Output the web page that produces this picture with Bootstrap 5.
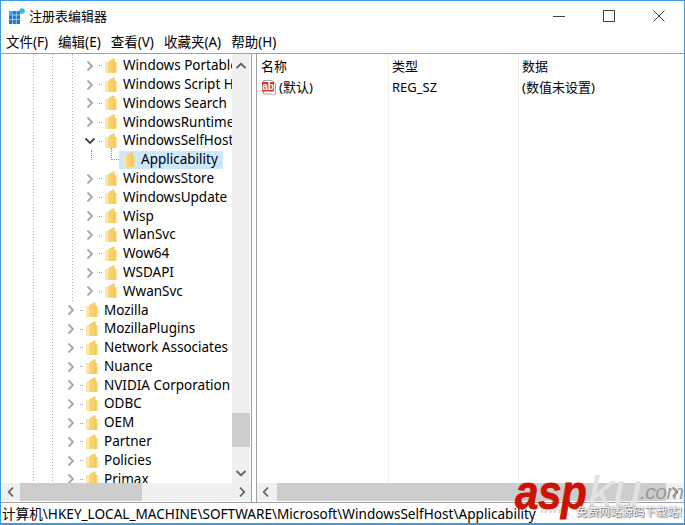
<!DOCTYPE html>
<html lang="zh-CN">
<head>
<meta charset="utf-8">
<title>注册表编辑器</title>
<link href="https://cdn.jsdelivr.net/npm/bootstrap@5.3.0/dist/css/bootstrap.min.css" rel="stylesheet">
<style>
html,body{height:100%;}
body{margin:0;background:#fff;color:#000;overflow:hidden;font-family:"Noto Sans","Noto Sans CJK SC",sans-serif;font-size:13.5px;line-height:1;}
.win{width:685px;height:525px;position:relative;border:solid #3c9ae0;border-width:1px 1px 2px 1px;overflow:hidden;}
.titlebar{height:30px;padding-left:8px;font-size:13px;}
.titlebar .ttl{margin-top:1px;margin-left:4px;}
.wctl{width:50px;height:30px;}
.menubar{height:23px;padding:1px 0 0 5px;font-size:13.5px;gap:10px;border-bottom:1px solid #a0a0a0;}
.panes{height:448px;}
.leftp{width:250px;border-right:1px solid #a0a0a0;margin-left:1px;}
.rightp{width:428px;border-left:1px solid #a0a0a0;margin-left:4px;}
.mainarea{height:429px;}
.tree{width:230px;overflow:hidden;padding-top:2.500px;background-repeat:no-repeat;
 background-image:repeating-linear-gradient(#aaa 0 1px,transparent 1px 3px),repeating-linear-gradient(#aaa 0 1px,transparent 1px 3px),repeating-linear-gradient(#aaa 0 1px,transparent 1px 3px);
 background-size:1px 100%,1px 100%,1px 248px;background-position:31px 0,50px 0,70px 0;}
.trow{height:18.8px;white-space:nowrap;display:flex;align-items:center;}
.lv2{padding-left:83px;}
.lv1{padding-left:64px;}
.trow .gl{flex:none;width:10px;height:12px;margin-right:4px;}
.trow .dash{flex:none;width:3px;border-top:1px dotted #999;margin-right:3px;}
.trow .fd{flex:none;width:12px;height:16px;margin-right:6px;}
.selbox{display:flex;align-items:center;background:#cce8ff;height:18px;width:104px;padding-left:4px;}
.selbox .fd{margin-right:6px;}
.elbow{width:8px;height:12px;margin-top:-12px;border-left:1px dotted #999;border-bottom:1px dotted #999;flex:none;}
.rowsel{padding-left:109px;position:relative;}
.guide91{height:10px;width:1px;border-left:1px dotted #999;position:absolute;left:89px;top:0;}
.vbar{width:18px;background:#f0f0f0;}
.vbar .thumb{height:34px;background:#cdcdcd;margin-top:338px;}
.vbar .arrow,.hbar .arrow{flex:none;display:flex;align-items:center;justify-content:center;}
.vbar .arrow{height:18px;width:18px;margin-top:3px;}
.vbar .arrow.lastarrow{margin-top:auto;margin-bottom:1px;}
.hbar{height:18px;background:#f0f0f0;}
.hbar .arrow{width:18px;height:18px;}
.hbar .thumb{background:#cdcdcd;height:100%;}
.lefth .thumb{width:122px;}
.righth .thumb{width:391px;margin-left:2px;}
.fillbar{flex:1;}
.lst{height:429px;position:relative;background-repeat:no-repeat;
 background-image:linear-gradient(#f0f0f0,#f0f0f0),linear-gradient(#f0f0f0,#f0f0f0);background-size:1px 100%,1px 100%;background-position:131px 0,261px 0;}
.lhead{height:22px;padding-top:3px;}
.cola{width:131px;padding-left:4px;}
.colb{width:130px;padding-left:4px;}
.colc{padding-left:4px;}
.lhead>div{font-size:13px;}
.lrow{height:21px;font-size:13px;padding-top:2px;}
.lrow .cola{display:flex;align-items:center;padding-left:4px;}
.abic{width:16px;height:17px;margin-right:2px;flex:none;}
.statusbar{height:20px;padding:3px 0 0 1px;font-size:13.6px;border-top:1px solid #a0a0a0;white-space:nowrap;}
.mark-wm{position:absolute;right:0;bottom:-2px;width:172px;height:50px;pointer-events:none;overflow:hidden;}
.wm-asp{position:absolute;left:3px;top:-10px;font:italic bold 48px "Liberation Sans",sans-serif;color:#cc1105;letter-spacing:-.5px;-webkit-text-stroke:.8px #cc1105;transform:scaleX(.88);transform-origin:left top;}
.wm-ku{position:absolute;left:76px;top:-15px;font:italic 52px "Liberation Sans",sans-serif;color:#e2e2e2;letter-spacing:-1px;}
.wm-com{position:absolute;left:128px;top:5px;font:italic 21px "Liberation Sans",sans-serif;color:#999;letter-spacing:-.5px;}
.wm-cn{position:absolute;left:64px;top:28px;font:11.400px "Noto Sans CJK SC",sans-serif;color:#fff;text-shadow:0 0 2px #555,1px 1px 1px #777;white-space:nowrap;}
.wm-www{position:absolute;left:28px;top:27px;font:italic 12px "Liberation Sans",sans-serif;color:#ccc;}
</style>
</head>
<body>
<svg width="0" height="0" class="position-absolute">
 <symbol id="chv" viewBox="0 0 10 12"><path d="M2.500 1.500 7 6 2.500 10.500" fill="none" stroke="#a6a6a6" stroke-width="1.800"/></symbol>
 <symbol id="chd" viewBox="0 0 10 12"><path d="M.5 3.500 5 8 9.500 3.500" fill="none" stroke="#404040" stroke-width="1.800"/></symbol>
 <symbol id="fold" viewBox="0 0 12 16">
  <path d="M0 4h11.500v11H0z" fill="#fbe7a6"/>
  <path d="M3.500 15V3L8 .5h1V4h2.500v11z" fill="#f9d26b"/>
  <path d="M9 .5v14" stroke="#eec055" stroke-width="1"/>
 </symbol>
 <symbol id="up" viewBox="0 0 12 8"><path d="M1.500 6 6 1.800 10.500 6" fill="none" stroke="#606060" stroke-width="1.800"/></symbol>
 <symbol id="dn" viewBox="0 0 12 8"><path d="M1.500 2 6 6.200 10.500 2" fill="none" stroke="#606060" stroke-width="1.800"/></symbol>
 <symbol id="lf" viewBox="0 0 8 12"><path d="M6 1.500 1.800 6 6 10.500" fill="none" stroke="#606060" stroke-width="1.800"/></symbol>
 <symbol id="rt" viewBox="0 0 8 12"><path d="M2 1.500 6.200 6 2 10.500" fill="none" stroke="#606060" stroke-width="1.800"/></symbol>
</svg>
<div class="win">
 <div class="titlebar d-flex align-items-center">
  <svg width="16" height="16" viewBox="0 0 16 16">
   <path d="M0 3h11v13H0z" fill="#1a78c8"/>
   <path d="M0 7h11M0 11.500h11M3.600 3v13M7.300 3v13" stroke="#bcdcf5" stroke-width=".8"/>
   <path d="M0 3h3.600v4H0z" fill="#4aa0e6"/>
   <circle cx="13" cy="3" r="2.800" fill="#41b6e8"/>
  </svg>
  <span class="ttl">注册表编辑器</span>
  <div class="ms-auto d-flex">
   <div class="wctl d-flex align-items-center justify-content-center"><svg width="12" height="12" viewBox="0 0 12 12"><path d="M0 6.500h12" stroke="#444"/></svg></div>
   <div class="wctl d-flex align-items-center justify-content-center"><svg width="12" height="12" viewBox="0 0 12 12"><rect x=".5" y=".5" width="11" height="11" fill="none" stroke="#444"/></svg></div>
   <div class="wctl d-flex align-items-center justify-content-center"><svg width="12" height="12" viewBox="0 0 12 12"><path d="M.5.500l11 11M11.500.500l-11 11" stroke="#444"/></svg></div>
  </div>
 </div>
 <div class="menubar d-flex align-items-center">
  <span>文件(F)</span><span>编辑(E)</span><span>查看(V)</span><span>收藏夹(A)</span><span>帮助(H)</span>
 </div>
 <div class="panes d-flex">
  <div class="leftp d-flex flex-column">
   <div class="mainarea d-flex">
    <div class="tree position-relative">
     <div class="trow lv2"><svg class="gl"><use href="#chv"/></svg><i class="dash"></i><svg class="fd"><use href="#fold"/></svg><span>Windows Portable Devices</span></div>
     <div class="trow lv2"><svg class="gl"><use href="#chv"/></svg><i class="dash"></i><svg class="fd"><use href="#fold"/></svg><span>Windows Script Host</span></div>
     <div class="trow lv2"><svg class="gl"><use href="#chv"/></svg><i class="dash"></i><svg class="fd"><use href="#fold"/></svg><span>Windows Search</span></div>
     <div class="trow lv2"><svg class="gl"><use href="#chv"/></svg><i class="dash"></i><svg class="fd"><use href="#fold"/></svg><span>WindowsRuntime</span></div>
     <div class="trow lv2"><svg class="gl"><use href="#chd"/></svg><i class="dash"></i><svg class="fd"><use href="#fold"/></svg><span>WindowsSelfHost</span></div>
     <div class="trow rowsel"><i class="guide91"></i><i class="elbow"></i><div class="selbox"><svg class="fd"><use href="#fold"/></svg><span>Applicability</span></div></div>
     <div class="trow lv2"><svg class="gl"><use href="#chv"/></svg><i class="dash"></i><svg class="fd"><use href="#fold"/></svg><span>WindowsStore</span></div>
     <div class="trow lv2"><svg class="gl"><use href="#chv"/></svg><i class="dash"></i><svg class="fd"><use href="#fold"/></svg><span>WindowsUpdate</span></div>
     <div class="trow lv2"><svg class="gl"><use href="#chv"/></svg><i class="dash"></i><svg class="fd"><use href="#fold"/></svg><span>Wisp</span></div>
     <div class="trow lv2"><svg class="gl"><use href="#chv"/></svg><i class="dash"></i><svg class="fd"><use href="#fold"/></svg><span>WlanSvc</span></div>
     <div class="trow lv2"><svg class="gl"><use href="#chv"/></svg><i class="dash"></i><svg class="fd"><use href="#fold"/></svg><span>Wow64</span></div>
     <div class="trow lv2"><svg class="gl"><use href="#chv"/></svg><i class="dash"></i><svg class="fd"><use href="#fold"/></svg><span>WSDAPI</span></div>
     <div class="trow lv2"><svg class="gl"><use href="#chv"/></svg><i class="dash"></i><svg class="fd"><use href="#fold"/></svg><span>WwanSvc</span></div>
     <div class="trow lv1"><svg class="gl"><use href="#chv"/></svg><i class="dash"></i><svg class="fd"><use href="#fold"/></svg><span>Mozilla</span></div>
     <div class="trow lv1"><svg class="gl"><use href="#chv"/></svg><i class="dash"></i><svg class="fd"><use href="#fold"/></svg><span>MozillaPlugins</span></div>
     <div class="trow lv1"><svg class="gl"><use href="#chv"/></svg><i class="dash"></i><svg class="fd"><use href="#fold"/></svg><span>Network Associates</span></div>
     <div class="trow lv1"><svg class="gl"><use href="#chv"/></svg><i class="dash"></i><svg class="fd"><use href="#fold"/></svg><span>Nuance</span></div>
     <div class="trow lv1"><svg class="gl"><use href="#chv"/></svg><i class="dash"></i><svg class="fd"><use href="#fold"/></svg><span>NVIDIA Corporation</span></div>
     <div class="trow lv1"><svg class="gl"><use href="#chv"/></svg><i class="dash"></i><svg class="fd"><use href="#fold"/></svg><span>ODBC</span></div>
     <div class="trow lv1"><svg class="gl"><use href="#chv"/></svg><i class="dash"></i><svg class="fd"><use href="#fold"/></svg><span>OEM</span></div>
     <div class="trow lv1"><svg class="gl"><use href="#chv"/></svg><i class="dash"></i><svg class="fd"><use href="#fold"/></svg><span>Partner</span></div>
     <div class="trow lv1"><svg class="gl"><use href="#chv"/></svg><i class="dash"></i><svg class="fd"><use href="#fold"/></svg><span>Policies</span></div>
     <div class="trow lv1"><svg class="gl"><use href="#chv"/></svg><i class="dash"></i><svg class="fd"><use href="#fold"/></svg><span>Primax</span></div>
    </div>
    <div class="vbar d-flex flex-column">
     <div class="arrow"><svg width="12" height="8"><use href="#up"/></svg></div>
     <div class="thumb"></div>
     <div class="arrow lastarrow"><svg width="12" height="8"><use href="#dn"/></svg></div>
    </div>
   </div>
   <div class="hbar lefth d-flex">
    <div class="arrow"><svg width="8" height="12"><use href="#lf"/></svg></div>
    <div class="thumb"></div>
    <div class="fillbar"></div>
    <div class="arrow"><svg width="8" height="12"><use href="#rt"/></svg></div>
   </div>
  </div>
  <div class="rightp d-flex flex-column">
   <div class="lst">
    <div class="lhead d-flex align-items-center"><div class="cola">名称</div><div class="colb">类型</div><div class="colc">数据</div></div>
    <div class="lrow d-flex align-items-center">
     <div class="cola">
      <svg class="abic" viewBox="0 0 16 17"><path d="M2.500 1.500h9l3 3v10.500l-3 1-2-1h-7z" fill="#fff" stroke="#a5a5a5"/><rect x="1" y="3" width="12" height="9.500" fill="#d9391c"/><text x="7" y="11" text-anchor="middle" font-family="Liberation Sans" font-weight="700" font-size="10" fill="#fff">ab</text></svg>
      <span>(默认)</span>
     </div>
     <div class="colb">REG_SZ</div>
     <div class="colc">(数值未设置)</div>
    </div>
   </div>
   <div class="hbar righth d-flex">
    <div class="arrow"><svg width="8" height="12"><use href="#lf"/></svg></div>
    <div class="thumb"></div>
    <div class="fillbar"></div>
    <div class="arrow"><svg width="8" height="12"><use href="#rt"/></svg></div>
   </div>
  </div>
 </div>
 <div class="statusbar d-flex align-items-center">计算机\HKEY_LOCAL_MACHINE\SOFTWARE\Microsoft\WindowsSelfHost\Applicability</div>
 <div class="mark-wm">
  <span class="wm-ku">ku</span><span class="wm-com">.com</span><span class="wm-www">www.</span>
  <span class="wm-asp">asp</span><span class="wm-cn">免费网站源码下载站!</span>
 </div>
</div>
</body>
</html>
